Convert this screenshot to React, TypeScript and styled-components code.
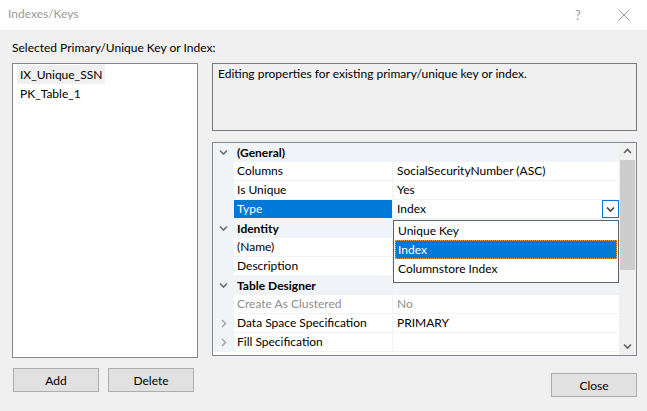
import React from "react";
import styled, { createGlobalStyle } from "styled-components";

const GlobalStyle = createGlobalStyle`
  html, body {
    margin: 0;
    padding: 0;
    background: #f0f0f0;
  }
  body {
    font-family: Lato, "Liberation Sans", sans-serif;
    font-size: 12px;
    color: #000;
  }
`;

const Window = styled.div`
  width: 647px;
  height: 411px;
  background: #f0f0f0;
  display: flex;
  flex-direction: column;
  overflow: hidden;
`;

const TitleBar = styled.div`
  height: 30px;
  background: #fff;
  display: flex;
  align-items: center;
  padding-left: 8px;
  color: #9a9a9a;
  font-size: 12px;
`;

const Title = styled.div`
  flex: 1;
  margin-top: -3px;
`;

const TitleButton = styled.div`
  width: 46px;
  height: 30px;
  display: flex;
  align-items: center;
  justify-content: center;
  color: #9a9a9a;
  font-size: 13px;
`;

const Body = styled.div`
  flex: 1;
  display: grid;
  grid-template-columns: 186px 425px;
  grid-template-rows: 23px auto;
  column-gap: 14px;
  padding: 10px 0 0 12px;
`;

const Caption = styled.div`
  grid-column: 1 / span 2;
  line-height: 16px;
`;

const Column = styled.div`
  display: flex;
  flex-direction: column;
`;

const ListBox = styled.div`
  height: 295px;
  box-sizing: border-box;
  background: #fff;
  border: 1px solid #828790;
  padding: 1px 4px;
`;

const ListItem = styled.div<{ $selected?: boolean }>`
  height: 19px;
  line-height: 19px;
  padding: 0 3px;
  width: fit-content;
  background: ${(p) => (p.$selected ? "#f0f0f0" : "transparent")};
`;

const ButtonRow = styled.div<{ $right?: boolean }>`
  display: flex;
  gap: 9px;
  justify-content: ${(p) => (p.$right ? "flex-end" : "flex-start")};
  margin-top: ${(p) => (p.$right ? "17px" : "10px")};
  padding-left: ${(p) => (p.$right ? "0" : "1px")};
`;

const Button = styled.div`
  width: 86px;
  height: 24px;
  box-sizing: border-box;
  background: #e1e1e1;
  border: 1px solid #adadad;
  display: flex;
  align-items: center;
  justify-content: center;
`;

const Description = styled.div`
  height: 68px;
  box-sizing: border-box;
  border: 1px solid #7a7a7a;
  padding: 2px 5px;
  line-height: 16px;
`;

const Grid = styled.div`
  position: relative;
  margin-top: 11px;
  height: 214px;
  box-sizing: border-box;
  border: 1px solid #828790;
  background: #fff;
  display: flex;
`;

const Rows = styled.div`
  flex: 1;
  overflow: hidden;
`;

const CategoryRow = styled.div`
  height: 19px;
  display: flex;
  align-items: center;
  background: #f0f4f9;
  font-weight: bold;
`;

const PropRow = styled.div`
  height: 19px;
  display: flex;
  background: #f0f4f9;
`;

const Gutter = styled.div`
  width: 21px;
  flex: none;
  display: flex;
  align-items: center;
  justify-content: center;
`;

const NameCell = styled.div<{ $selected?: boolean; $disabled?: boolean }>`
  width: 159px;
  flex: none;
  box-sizing: border-box;
  padding-left: 3px;
  line-height: 18px;
  height: 18px;
  border-right: 1px solid #f0f4f9;
  background: ${(p) => (p.$selected ? "#0078d7" : "#fff")};
  color: ${(p) => (p.$selected ? "#fff" : p.$disabled ? "#8d8d8d" : "#000")};
`;

const ValueCell = styled.div<{ $disabled?: boolean }>`
  flex: 1;
  position: relative;
  padding-left: 4px;
  line-height: 18px;
  height: 18px;
  background: #fff;
  color: ${(p) => (p.$disabled ? "#8d8d8d" : "#000")};
`;

const DropButton = styled.div`
  position: absolute;
  right: 0;
  top: 0;
  width: 17px;
  height: 18px;
  box-sizing: border-box;
  border: 1px solid #0078d7;
  display: flex;
  align-items: center;
  justify-content: center;
  background: #fff;
`;

const DropList = styled.div`
  position: absolute;
  left: 180px;
  top: 77px;
  width: 226px;
  height: 63px;
  box-sizing: border-box;
  border: 1px solid #646464;
  background: #fff;
  padding: 0 1px;
`;

const DropItem = styled.div<{ $selected?: boolean }>`
  height: 19px;
  line-height: 19px;
  padding-left: 3px;
  background: ${(p) => (p.$selected ? "#0078d7" : "#fff")};
  color: ${(p) => (p.$selected ? "#fff" : "#000")};
  outline: ${(p) => (p.$selected ? "1px dotted #f5a04a" : "none")};
  outline-offset: -1px;
`;

const ScrollBar = styled.div`
  width: 17px;
  flex: none;
  background: #f0f0f0;
  display: flex;
  flex-direction: column;
  align-items: center;
`;

const ScrollArrow = styled.div`
  height: 17px;
  width: 17px;
  display: flex;
  align-items: center;
  justify-content: center;
`;

const Thumb = styled.div`
  width: 15px;
  height: 110px;
  background: #cdcdcd;
`;

const Spacer = styled.div`
  flex: 1;
`;

const Chevron = ({ dir, color }: { dir: "down" | "right" | "up"; color: string }) => {
  const d =
    dir === "down" ? "M1 2.5 L4.5 6 L8 2.5" : dir === "up" ? "M1 6 L4.5 2.5 L8 6" : "M3 1 L6.5 4.5 L3 8";
  return (
    <svg width="9" height="9" viewBox="0 0 9 9">
      <path d={d} fill="none" stroke={color} strokeWidth="1.6" />
    </svg>
  );
};

const Close = () => (
  <svg width="12" height="12" viewBox="0 0 12 12">
    <path d="M0.5 0.5 L11.5 11.5 M11.5 0.5 L0.5 11.5" stroke="#9a9a9a" strokeWidth="1" />
  </svg>
);

type Prop = {
  name: string;
  value?: string;
  collapsed?: boolean;
  disabled?: boolean;
  selected?: boolean;
  dropdown?: boolean;
};

const sections: { title: string; props: Prop[] }[] = [
  {
    title: "(General)",
    props: [
      { name: "Columns", value: "SocialSecurityNumber (ASC)" },
      { name: "Is Unique", value: "Yes" },
      { name: "Type", value: "Index", selected: true, dropdown: true },
    ],
  },
  {
    title: "Identity",
    props: [{ name: "(Name)" }, { name: "Description" }],
  },
  {
    title: "Table Designer",
    props: [
      { name: "Create As Clustered", value: "No", disabled: true },
      { name: "Data Space Specification", value: "PRIMARY", collapsed: true },
      { name: "Fill Specification", collapsed: true },
    ],
  },
];

export default function App() {
  return (
    <Window>
      <GlobalStyle />
      <TitleBar>
        <Title>Indexes/Keys</Title>
        <TitleButton>?</TitleButton>
        <TitleButton>
          <Close />
        </TitleButton>
      </TitleBar>
      <Body>
        <Caption>Selected Primary/Unique Key or Index:</Caption>
        <Column>
          <ListBox>
            <ListItem $selected>IX_Unique_SSN</ListItem>
            <ListItem>PK_Table_1</ListItem>
          </ListBox>
          <ButtonRow>
            <Button>Add</Button>
            <Button>Delete</Button>
          </ButtonRow>
        </Column>
        <Column>
          <Description>Editing properties for existing primary/unique key or index.</Description>
          <Grid>
            <Rows>
              {sections.map((s) => (
                <React.Fragment key={s.title}>
                  <CategoryRow>
                    <Gutter>
                      <Chevron dir="down" color="#6d6d6d" />
                    </Gutter>
                    <span style={{ paddingLeft: 3 }}>{s.title}</span>
                  </CategoryRow>
                  {s.props.map((p) => (
                    <PropRow key={p.name}>
                      <Gutter>{p.collapsed && <Chevron dir="right" color="#a6a6a6" />}</Gutter>
                      <NameCell $selected={p.selected} $disabled={p.disabled}>
                        {p.name}
                      </NameCell>
                      <ValueCell $disabled={p.disabled}>
                        {p.value}
                        {p.dropdown && (
                          <DropButton>
                            <Chevron dir="down" color="#404040" />
                          </DropButton>
                        )}
                      </ValueCell>
                    </PropRow>
                  ))}
                </React.Fragment>
              ))}
            </Rows>
            <ScrollBar>
              <ScrollArrow>
                <Chevron dir="up" color="#606060" />
              </ScrollArrow>
              <Thumb />
              <Spacer />
              <ScrollArrow>
                <Chevron dir="down" color="#606060" />
              </ScrollArrow>
            </ScrollBar>
            <DropList>
              <DropItem>Unique Key</DropItem>
              <DropItem $selected>Index</DropItem>
              <DropItem>Columnstore Index</DropItem>
            </DropList>
          </Grid>
          <ButtonRow $right>
            <Button>Close</Button>
          </ButtonRow>
        </Column>
      </Body>
    </Window>
  );
}
